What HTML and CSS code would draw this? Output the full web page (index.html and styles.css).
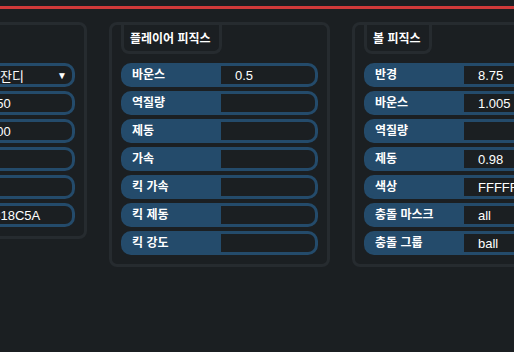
FILE: index.html
```html
<!DOCTYPE html>
<html lang="ko">
<head>
<meta charset="utf-8">
<link rel="stylesheet" href="styles.css">
</head>
<body>
<div class="topbar"></div>
<div class="panels">
  <section class="panel">
    <div class="tab">지형 설정</div>
    <div class="row"><div class="label">지형 종류</div><div class="value select"><span class="sel-text">잔디</span><span class="caret">▼</span></div></div>
    <div class="row"><div class="label">너비</div><div class="value num">150</div></div>
    <div class="row"><div class="label">높이</div><div class="value num">100</div></div>
    <div class="row"><div class="label">마찰</div><div class="value num"></div></div>
    <div class="row"><div class="label">반발</div><div class="value num"></div></div>
    <div class="row"><div class="label">색상</div><div class="value num hex">#318C5A</div></div>
  </section>
  <section class="panel">
    <div class="tab">플레이어 피직스</div>
    <div class="row"><div class="label">바운스</div><div class="value">0.5</div></div>
    <div class="row"><div class="label">역질량</div><div class="value"></div></div>
    <div class="row"><div class="label">제동</div><div class="value"></div></div>
    <div class="row"><div class="label">가속</div><div class="value"></div></div>
    <div class="row"><div class="label">킥 가속</div><div class="value"></div></div>
    <div class="row"><div class="label">킥 제동</div><div class="value"></div></div>
    <div class="row"><div class="label">킥 강도</div><div class="value"></div></div>
  </section>
  <section class="panel">
    <div class="tab">볼 피직스</div>
    <div class="row"><div class="label">반경</div><div class="value">8.75</div></div>
    <div class="row"><div class="label">바운스</div><div class="value">1.005</div></div>
    <div class="row"><div class="label">역질량</div><div class="value"></div></div>
    <div class="row"><div class="label">제동</div><div class="value">0.98</div></div>
    <div class="row"><div class="label">색상</div><div class="value">FFFFFF</div></div>
    <div class="row"><div class="label">충돌 마스크</div><div class="value">all</div></div>
    <div class="row"><div class="label">충돌 그룹</div><div class="value">ball</div></div>
  </section>
</div>
</body>
</html>
```
FILE: styles.css
```css
html, body {
  margin: 0;
  padding: 0;
  background: #1b1f22;
  overflow: hidden;
  width: 514px;
  height: 352px;
}
body {
  font-family: "Liberation Sans", "Noto Sans CJK KR", sans-serif;
  color: #ffffff;
}
.topbar {
  margin-top: 6px;
  height: 3px;
  background: #d03a3a;
}
.panels {
  display: flex;
  align-items: flex-start;
  gap: 22px;
  margin-top: 13px;
  margin-left: -134px;
}
.panel {
  flex: 0 0 221px;
  box-sizing: border-box;
  border: 3px solid #262b2f;
  border-radius: 8px;
  padding: 0 9px 9px 9px;
  display: flex;
  flex-direction: column;
  gap: 4px;
}
.tab {
  align-self: flex-start;
  box-sizing: border-box;
  height: 29px;
  border: 3px solid #262b2f;
  border-top: none;
  border-radius: 0 0 8px 8px;
  padding: 0 8px 0 6px;
  font-family: "Noto Sans CJK KR", sans-serif;
  font-weight: bold;
  font-size: 12px;
  line-height: 26px;
  margin-bottom: 5px;
  color: #ffffff;
}
.row {
  display: flex;
  box-sizing: border-box;
  height: 24px;
  border: 3px solid #244b6b;
  border-radius: 10px;
  background: #244b6b;
}
.label {
  flex: 0 0 97px;
  box-sizing: border-box;
  padding-left: 8px;
  font-family: "Noto Sans CJK KR", sans-serif;
  font-weight: bold;
  font-size: 12px;
  line-height: 16px;
  white-space: nowrap;
  overflow: hidden;
}
.value {
  flex: 1;
  background: #1b1f22;
  border-radius: 0 7px 7px 0;
  padding-left: 14px;
  font-size: 13px;
  line-height: 19px;
  white-space: nowrap;
  overflow: hidden;
}
.value.num {
  padding-left: 11px;
}
.value.hex {
  padding-left: 8px;
}
.select {
  display: flex;
  align-items: center;
  justify-content: space-between;
  padding-left: 22px;
  padding-right: 5px;
}
.sel-text {
  font-family: "Noto Sans CJK KR", sans-serif;
  font-size: 13px;
}
.caret {
  font-size: 10px;
}
```
